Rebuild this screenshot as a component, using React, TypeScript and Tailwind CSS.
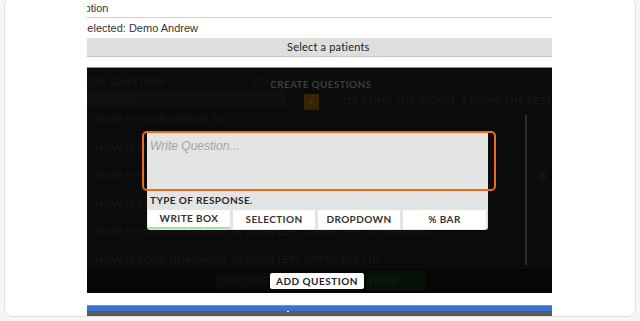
import React from "react";

const gothic = { fontFamily: "Lato, 'DejaVu Sans', sans-serif" };
const helv = { fontFamily: "'Liberation Sans', Arial, sans-serif" };

function Row({ text, last }: { text: string; last?: boolean }) {
  return (
    <div
      className={`flex items-start pl-[8px] pt-[5px] ${last ? "h-[22px]" : "h-[28px] border-b border-[#111111]"}`}
    >
      <span className="text-[10px] leading-[14px] font-bold tracking-[0.4px] text-[#151515] whitespace-nowrap" style={gothic}>
        {text}
      </span>
    </div>
  );
}

export default function App() {
  return (
    <div className="w-[640px] h-[321px] bg-[#f6f6f6] overflow-hidden">
      <div className="ml-[4px] mt-[-4px] w-[632px] h-[321px] bg-white border border-[#e0e0e0] rounded-[9px] overflow-hidden">
        <div className="ml-[82px] w-[465px] pt-[3px]">
          {/* Option row */}
          <div className="h-[18px] border-b border-[#d2d2d2] overflow-hidden flex items-center">
            <span className="ml-[-11px] text-[11px] text-[#333] whitespace-nowrap" style={helv}>Option</span>
          </div>
          <div className="h-[20px] overflow-hidden flex items-center">
            <span className="ml-[-7px] text-[11px] text-[#333] whitespace-nowrap" style={helv}>Selected: Demo Andrew</span>
          </div>
          <div className="h-[19px] bg-[#dedede] border-b border-[#c4c4c4] flex items-center">
            <span className="ml-[200px] text-[11px] tracking-[0.2px] text-[#222] whitespace-nowrap" style={{ fontFamily: "Lato, sans-serif" }}>
              Select a patients
            </span>
          </div>
          <div className="h-[10px]" />
          {/* dark area */}
          <div className="relative h-[226px] bg-[#0b0b0b] border-t border-[#8c8c8c] flex flex-col">
            <div className="h-[22px] relative flex items-start">
              <span className="mt-[6px] text-[10px] font-bold tracking-[0.4px] text-[#151515] whitespace-nowrap" style={gothic}>
                OSE QUESTION
              </span>
              <span className="ml-[88px] mt-[6px] text-[10px] font-bold text-[#131313]" style={gothic}>CON</span>
              <span className="ml-[-5px] mt-[9px] text-[10px] font-bold tracking-[0.3px] text-[#3e3e3e] whitespace-nowrap" style={gothic}>
                CREATE QUESTIONS
              </span>
            </div>
            <div className="h-[17px] flex items-start">
              <div className="w-[205px] h-[17px] bg-[#0f0f0f] flex items-center">
                <span className="ml-[2px] text-[9px] font-bold text-[#151515]" style={gothic}>TIMEZONE</span>
              </div>
              <div className="ml-[18px] mt-[4px] w-[16px] h-[16px] bg-[#352500] flex items-center justify-center text-[10px] text-[#4a3810]">+</div>
              <span className="ml-[24px] mt-[3px] text-[10px] font-bold tracking-[0.3px] text-[#151515] whitespace-nowrap" style={gothic}>
                (10 BEING THE WORST, 1 BEING THE BEST
              </span>
            </div>
            <Row text="HOW IS YOUR MOTOR TIC" />
            <Row text="HOW IS YOUR STUTTER" />
            <Row text="HOW IS YOUR SLEEP QUALITY TODAY" />
            <Row text="HOW IS YOUR NUMBNESS IN YOUR LEFT EYE" />
            <Row text="HOW IS YOUR NUMBNESS IN YOUR LEFT UPPER EYE LID VERSION" />
            <Row text="HOW IS YOUR NUMBNESS IN YOUR LEFT UPPER EYE LID" last />
            <div className="h-[24px] bg-[#060606] flex items-center">
              <div className="ml-[128px] w-[54px] h-[17px] bg-[#0a0a08] flex items-center justify-center">
                <span className="text-[9px] font-bold text-[#131310]" style={gothic}>QUESTIONS</span>
              </div>
              <div className="ml-[1px] w-[94px] h-[16px] bg-white rounded-[2px] flex items-center justify-center">
                <span className="text-[10px] font-bold tracking-[0.5px] text-[#222]" style={gothic}>ADD QUESTION</span>
              </div>
              <div className="ml-[2px] w-[59px] h-[20px] bg-[#061006] flex items-center pl-[3px]">
                <span className="text-[9px] font-bold text-[#0d1f10]" style={gothic}>FINISH</span>
              </div>
            </div>

            {/* scrollbar */}
            <div className="absolute left-[438px] top-[47px] w-[2px] h-[150px] bg-[#2a2a2a]" />
            <div className="absolute left-[451px] top-[104px] w-[9px] h-[9px] rounded-full bg-[#121212]" />

            {/* modal */}
            <div className="absolute left-[60px] top-[64px] w-[341px] h-[98px] bg-[#e4e4e4] rounded-b-[3px] flex flex-col">
              <div className="h-[58px] pl-[3px] pt-[0px]">
                <span className="italic text-[12px] leading-[16px] text-[#a3a3a3]" style={helv}>Write Question...</span>
              </div>
              <div className="h-[20px] flex items-center pl-[3px]">
                <span className="text-[10px] font-bold tracking-[0.4px] text-[#2a2a2a]" style={gothic}>TYPE OF RESPONSE.</span>
              </div>
              <div className="h-[19px] flex gap-[3px] pl-[1px]">
                {["WRITE BOX", "SELECTION", "DROPDOWN", "% BAR"].map((t, i) => (
                  <div
                    key={t}
                    className={`h-[19px] bg-white flex items-center justify-center ${i === 0 ? "border-b-2 border-[#a5e3a0]" : ""} ${i === 3 ? "rounded-br-[3px] w-[83px]" : "w-[82px]"}`}
                  >
                    <span className="text-[10px] font-bold tracking-[0.4px] text-[#333]" style={gothic}>{t}</span>
                  </div>
                ))}
              </div>
            </div>
            <div className="absolute left-[55px] top-[63px] w-[354px] h-[60px] border-2 border-[#f26a12] rounded-[5px]" />
          </div>
          <div className="h-[12px] bg-white" />
          <div className="h-[6px] bg-[#3c73d3] border-t border-[#6a95dd]" />
          <div className="relative h-[10px] bg-[#5a5a5a]">
            <div className="absolute left-[200px] top-0 w-[2px] h-[1px] bg-white" />
          </div>
        </div>
      </div>
    </div>
  );
}
